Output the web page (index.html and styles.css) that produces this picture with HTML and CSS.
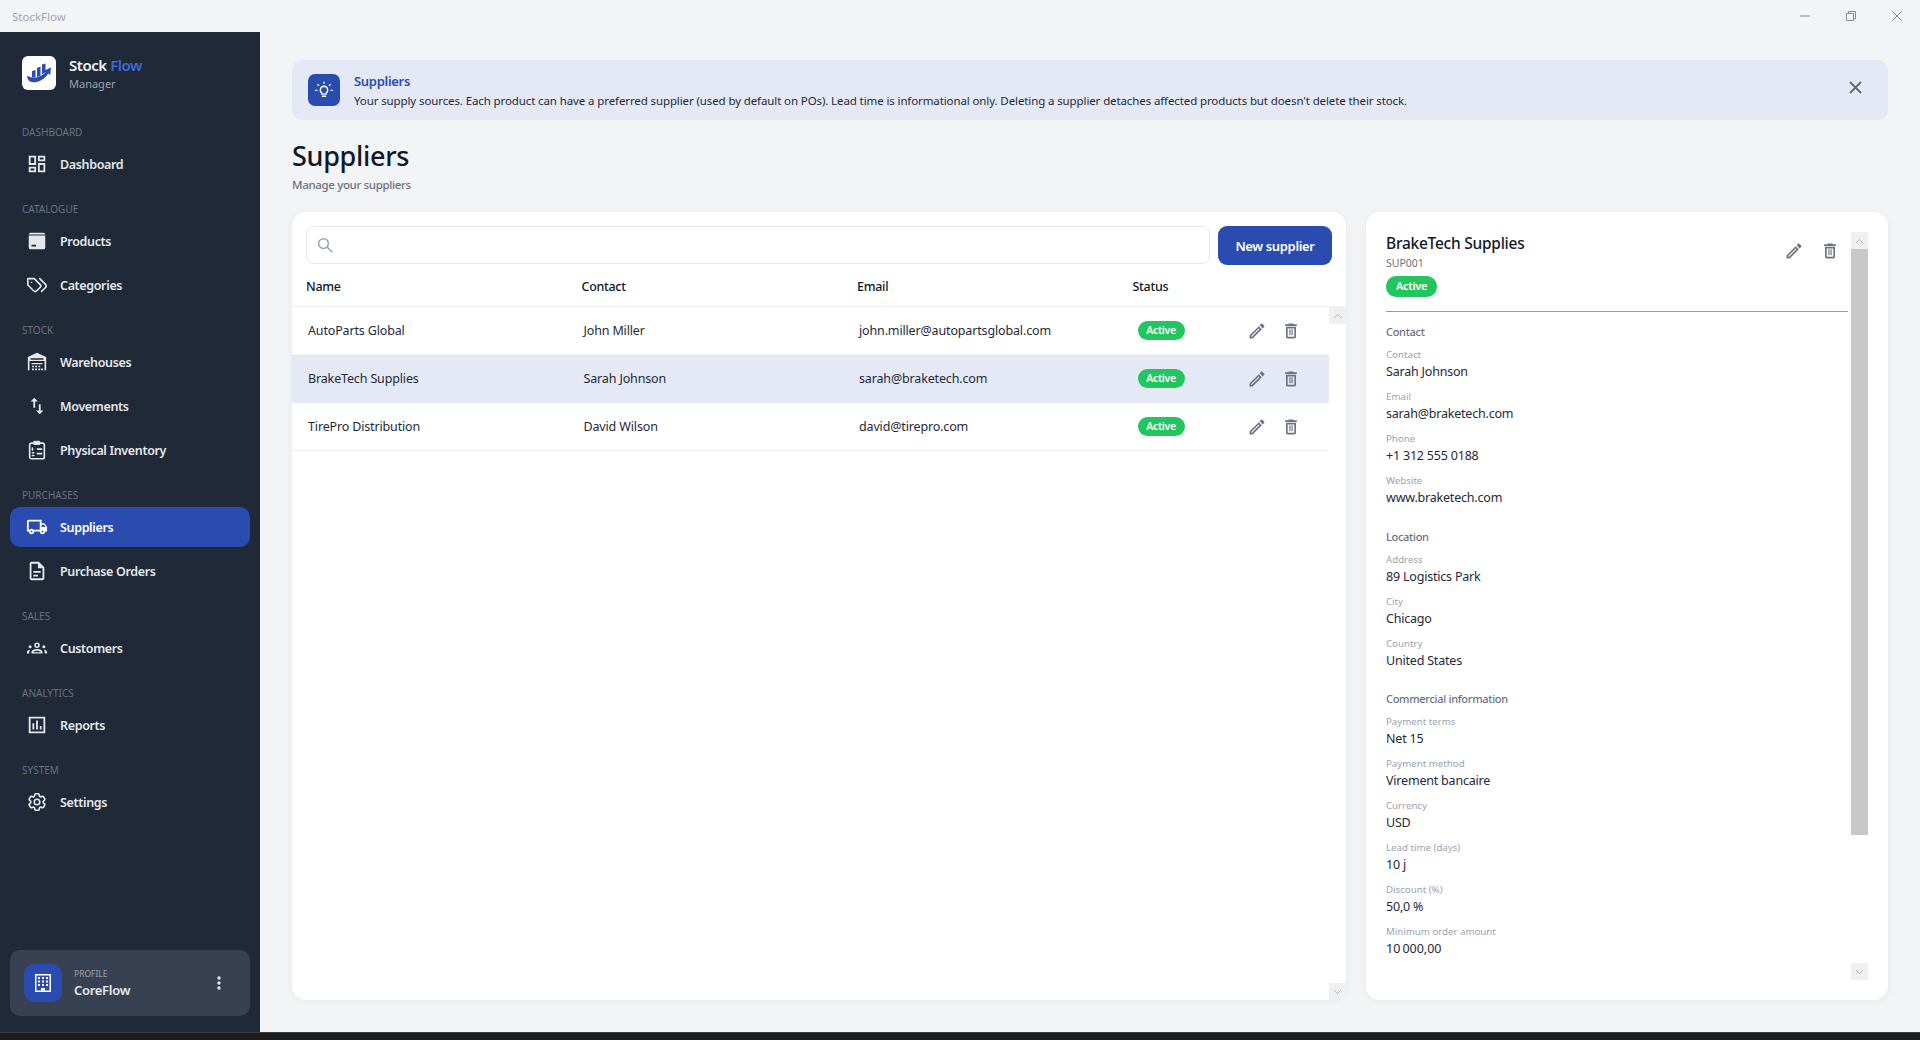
FILE: index.html
```html
<!DOCTYPE html>
<html>
<head>
    <title>StockFlow</title>
    <link rel="stylesheet" href="styles.css">
</head>
<body>
    <svg class="defs" width="0" height="0">
        <symbol id="i-edit" viewBox="0 0 24 24"><path d="M3 17.25V21h3.75L17.81 9.94l-3.75-3.75L3 17.25zM5.92 19H5v-.92l9.06-9.06.92.92L5.92 19zM20.71 5.63l-2.34-2.34c-.2-.2-.45-.29-.71-.29s-.51.1-.7.29l-1.83 1.83 3.75 3.75 1.83-1.83c.39-.39.39-1.02 0-1.41z"/></symbol>
        <symbol id="i-trash" viewBox="0 0 24 24"><path d="M16 9v10H8V9h8m-1.5-6h-5l-1 1H5v2h14V4h-3.5l-1-1zM18 7H6v12c0 1.1.9 2 2 2h8c1.1 0 2-.9 2-2V7z"/><path d="M10 10h1.4v7H10zM12.6 10H14v7h-1.4z"/></symbol>
    </svg>

    <!-- title bar -->
    <header class="titlebar">
        <span class="app-name">StockFlow</span>
        <div class="win-controls">
            <svg width="12" height="12" viewBox="0 0 12 12"><path d="M1 6h10" /></svg>
            <svg width="12" height="12" viewBox="0 0 12 12"><path d="M1.5 3.5h7v7h-7zM3.5 3.5v-2h7v7h-2" /></svg>
            <svg width="12" height="12" viewBox="0 0 12 12"><path d="M1 1l10 10M11 1L1 11" /></svg>
        </div>
    </header>

    <div class="app">
        <!-- sidebar -->
        <aside class="sidebar">
            <div class="brand">
                <div class="brand-logo">
                    <svg width="26" height="26" viewBox="0 0 26 26">
                        <path d="M6 11l3.500-1v7l-3.500.5zM11 8l3.500-1.500V16l-3.500.8zM16 4.500l3.500-1v8.500L16 14.500z" fill="#2a4bb3"/>
                        <path d="M1 15.500c5 3.500 13 2.500 18.500-3L17.500 11 25 7.500l-.8 7.500-2-1.500C18 20.500 9 24 4 21.500c-2-1-2.700-3.500-3-6z" fill="#2a4bb3"/>
                    </svg>
                </div>
                <div>
                    <div class="brand-name">Stock <span class="flow">Flow</span></div>
                    <div class="brand-sub">Manager</div>
                </div>
            </div>

            <nav class="nav">
                <div class="nav-label">DASHBOARD</div>
                <a class="nav-item"><svg class="nav-icon" viewBox="0 0 24 24"><path d="M19 5v2h-4V5h4M9 5v6H5V5h4m10 8v6h-4v-6h4M9 17v2H5v-2h4M21 3h-8v6h8V3zM11 3H3v10h8V3zm10 8h-8v10h8V11zm-10 4H3v6h8v-6z"/></svg>Dashboard</a>

                <div class="nav-label">CATALOGUE</div>
                <a class="nav-item"><svg class="nav-icon" viewBox="0 0 24 24"><path d="M5 3h14a2 2 0 0 1 2 2H3a2 2 0 0 1 2-2zM3 6h18v13a2 2 0 0 1-2 2H5a2 2 0 0 1-2-2zm3 10v2h5v-2z"/></svg>Products</a>
                <a class="nav-item"><svg class="nav-icon line" viewBox="0 0 24 24"><path d="M9 5H2v7l6.3 6.3c.9.9 2.5.9 3.4 0l3.6-3.6c.9-.9.9-2.5 0-3.4L9 5Z"/><path d="M6 9.01V9"/><path d="m15 5 6.3 6.3a2.4 2.4 0 0 1 0 3.4L17 19"/></svg>Categories</a>

                <div class="nav-label">STOCK</div>
                <a class="nav-item"><svg class="nav-icon" viewBox="0 0 24 24"><path d="M12 2 22 6.500V21h-1.800V11H3.800v10H2V6.500zM5 9.500h14V8H5z"/><path d="M6 13h12v1.500H6zM6.500 16h2v1.800h-2zm3.500 0h2v1.800h-2zm3.500 0h2v1.800h-2zM6.500 19.200h2V21h-2zm3.500 0h2V21h-2zm3.500 0h2V21h-2zm3 0h2V21h-2z"/></svg>Warehouses</a>
                <a class="nav-item"><svg class="nav-icon" viewBox="0 0 24 24"><path d="M16 17.01V10h-2v7.01h-3L15 21l4-3.990h-3zM9 3 5 6.990h3V14h2V6.990h3L9 3z"/></svg>Movements</a>
                <a class="nav-item"><svg class="nav-icon line" viewBox="0 0 24 24"><rect x="4" y="4.500" width="16" height="17" rx="2"/><rect x="9" y="2.500" width="6" height="3.500" fill="#e5e7eb" stroke-width="1"/><path d="M12.500 11H17M12.500 16H17M7 10v2M7 15h1.500M7 18h1.500"/></svg>Physical Inventory</a>

                <div class="nav-label">PURCHASES</div>
                <a class="nav-item active"><svg class="nav-icon" viewBox="0 0 24 24"><path d="M20 8h-3V4H3c-1.100 0-2 .9-2 2v11h2c0 1.660 1.340 3 3 3s3-1.340 3-3h6c0 1.660 1.340 3 3 3s3-1.340 3-3h2v-5l-3-4zm-.5 1.500 1.960 2.500H17V9.500h2.500zM6 18c-.55 0-1-.45-1-1s.45-1 1-1 1 .45 1 1-.45 1-1 1zm2.220-3c-.55-.61-1.330-1-2.220-1s-1.670.39-2.220 1H3V6h12v9H8.220zM18 18c-.55 0-1-.45-1-1s.45-1 1-1 1 .45 1 1-.45 1-1 1z"/></svg>Suppliers</a>
                <a class="nav-item"><svg class="nav-icon" viewBox="0 0 24 24"><path d="M8 16h5v2H8zm0-4h8v2H8zm6-10H6c-1.100 0-2 .9-2 2v16c0 1.100.89 2 1.990 2H18c1.100 0 2-.9 2-2V8l-6-6zm4 18H6V4h7v5h5v11z"/></svg>Purchase Orders</a>

                <div class="nav-label">SALES</div>
                <a class="nav-item"><svg class="nav-icon" viewBox="0 0 24 24"><path d="M12 6a3 3 0 1 1 0 6 3 3 0 0 1 0-6zm0 1.700a1.300 1.300 0 1 0 0 2.600 1.300 1.300 0 0 0 0-2.600zM6 16.500c0-2 3-3.300 6-3.300s6 1.300 6 3.300V18H6zm2 0h8c-.5-1-2.300-1.600-4-1.600S8.500 15.500 8 16.500zM4.500 9a1.700 1.700 0 1 1 0 3.400 1.700 1.700 0 0 1 0-3.400zM19.500 9a1.700 1.700 0 1 1 0 3.400 1.700 1.700 0 0 1 0-3.400zM1 16.500c0-1.500 1.500-2.500 3.500-2.700-.6.7-.9 1.600-.9 2.700V18H1zM23 16.500c0-1.500-1.500-2.500-3.500-2.700.6.7.9 1.600.9 2.700V18H23z"/></svg>Customers</a>

                <div class="nav-label">ANALYTICS</div>
                <a class="nav-item"><svg class="nav-icon" viewBox="0 0 24 24"><path d="M3 3h18v18H3zm2 2v14h14V5zM7 10h2v7H7zm4-3h2v10h-2zm4 6h2v4h-2z"/></svg>Reports</a>

                <div class="nav-label">SYSTEM</div>
                <a class="nav-item"><svg class="nav-icon line" viewBox="0 0 24 24"><path d="M9.594 3.940c.09-.542.56-.94 1.110-.94h2.593c.55 0 1.020.398 1.110.94l.213 1.281c.063.374.313.686.645.870.074.04.147.083.22.127.325.196.72.257 1.075.124l1.217-.456a1.125 1.125 0 0 1 1.370.49l1.296 2.247a1.125 1.125 0 0 1-.26 1.431l-1.003.827c-.293.241-.438.613-.43.992a7.723 7.723 0 0 1 0 .255c-.008.378.137.75.43.991l1.004.827c.424.35.534.955.26 1.430l-1.298 2.247a1.125 1.125 0 0 1-1.369.491l-1.217-.456c-.355-.133-.75-.072-1.076.124a6.470 6.470 0 0 1-.22.128c-.331.183-.581.495-.644.869l-.213 1.281c-.09.543-.56.94-1.110.94h-2.594c-.55 0-1.019-.398-1.110-.94l-.213-1.281c-.062-.374-.312-.686-.644-.870a6.520 6.520 0 0 1-.22-.127c-.325-.196-.72-.257-1.076-.124l-1.217.456a1.125 1.125 0 0 1-1.369-.49l-1.297-2.247a1.125 1.125 0 0 1 .26-1.431l1.004-.827c.292-.24.437-.613.43-.991a6.932 6.932 0 0 1 0-.255c.007-.38-.138-.751-.43-.992l-1.004-.827a1.125 1.125 0 0 1-.26-1.430l1.297-2.247a1.125 1.125 0 0 1 1.370-.491l1.216.456c.356.133.751.072 1.076-.124.072-.044.146-.086.22-.128.332-.183.582-.495.644-.869l.214-1.280Z"/><circle cx="12" cy="12" r="3"/></svg>Settings</a>
            </nav>

            <div class="profile">
                <div class="profile-icon">
                    <svg width="16" height="20" viewBox="0 0 16 20">
                        <path fill="#fff" d="M0 1h16v18H0zm1.500 1.500v15H6V15h4v2.500h4.500v-15z"/>
                        <path fill="#fff" d="M3 4h2v2H3zm4 0h2v2H7zm4 0h2v2h-2zM3 7.500h2v2H3zm4 0h2v2H7zm4 0h2v2h-2zM3 11h2v2H3zm4 0h2v2H7zm4 0h2v2h-2z"/>
                    </svg>
                </div>
                <div class="profile-text">
                    <div class="profile-label">PROFILE</div>
                    <div class="profile-name">CoreFlow</div>
                </div>
                <svg class="profile-more" width="4" height="14" viewBox="0 0 4 14"><circle cx="2" cy="2" r="1.700"/><circle cx="2" cy="7" r="1.700"/><circle cx="2" cy="12" r="1.700"/></svg>
            </div>
        </aside>

        <!-- main -->
        <main class="main">
            <div class="banner">
                <div class="banner-icon">
                    <svg class="bulb" width="20" height="20" viewBox="0 0 24 24">
                        <path d="M12 7.500a4.500 4.500 0 0 0-2.500 8.200V17h5v-1.300A4.500 4.500 0 0 0 12 7.500zM10 19.500h4"/>
                        <path d="M12 2.500v1.500M4.500 5.500l1 1M19.500 5.500l-1 1M2 12.500h1.500M20.500 12.500H22"/>
                    </svg>
                </div>
                <div class="banner-text">
                    <div class="banner-title">Suppliers</div>
                    <div class="banner-desc">Your supply sources. Each product can have a preferred supplier (used by default on POs). Lead time is informational only. Deleting a supplier detaches affected products but doesn't delete their stock.</div>
                </div>
                <svg class="banner-close" width="13" height="13" viewBox="0 0 13 13"><path d="M1 1l11 11M12 1L1 12"/></svg>
            </div>

            <h1 class="page-title">Suppliers</h1>
            <div class="page-sub">Manage your suppliers</div>

            <div class="panels">
                <section class="list-card">
                    <div class="toolbar">
                        <div class="search">
                            <svg width="18" height="18" viewBox="0 0 24 24"><circle cx="10" cy="10" r="6.500"/><path d="M15 15l6.500 6.500"/></svg>
                        </div>
                        <button class="btn-primary">New supplier</button>
                    </div>
                    <div class="table-head">
                        <div>Name</div>
                        <div>Contact</div>
                        <div>Email</div>
                        <div>Status</div>
                    </div>
                    <div class="table-wrap">
                        <div class="table-body">
                            <div class="row">
                                <div>AutoParts Global</div>
                                <div>John Miller</div>
                                <div>john.miller@autopartsglobal.com</div>
                                <div class="status-cell"><span class="badge">Active</span></div>
                                <div class="row-actions"><svg class="act"><use href="#i-edit"/></svg><svg class="act"><use href="#i-trash"/></svg></div>
                            </div>
                            <div class="row selected">
                                <div>BrakeTech Supplies</div>
                                <div>Sarah Johnson</div>
                                <div>sarah@braketech.com</div>
                                <div class="status-cell"><span class="badge">Active</span></div>
                                <div class="row-actions"><svg class="act"><use href="#i-edit"/></svg><svg class="act"><use href="#i-trash"/></svg></div>
                            </div>
                            <div class="row">
                                <div>TirePro Distribution</div>
                                <div>David Wilson</div>
                                <div>david@tirepro.com</div>
                                <div class="status-cell"><span class="badge">Active</span></div>
                                <div class="row-actions"><svg class="act"><use href="#i-edit"/></svg><svg class="act"><use href="#i-trash"/></svg></div>
                            </div>
                        </div>
                        <div class="scrollbar">
                            <div class="sb-btn"><svg width="9" height="6" viewBox="0 0 9 6"><path d="M1 5l3.500-3.500L8 5"/></svg></div>
                            <div class="sb-track"></div>
                            <div class="sb-btn"><svg width="9" height="6" viewBox="0 0 9 6"><path d="M1 1l3.500 3.500L8 1"/></svg></div>
                        </div>
                    </div>
                </section>

                <section class="detail-card">
                    <div class="detail-scroll">
                        <div class="detail-head">
                            <div>
                                <div class="detail-name">BrakeTech Supplies</div>
                                <div class="detail-code">SUP001</div>
                                <span class="badge badge-lg">Active</span>
                            </div>
                            <div class="detail-actions"><svg class="act"><use href="#i-edit"/></svg><svg class="act"><use href="#i-trash"/></svg></div>
                        </div>

                        <div class="section-title">Contact</div>
                        <div class="field"><div class="field-label">Contact</div><div class="field-value">Sarah Johnson</div></div>
                        <div class="field"><div class="field-label">Email</div><div class="field-value">sarah@braketech.com</div></div>
                        <div class="field"><div class="field-label">Phone</div><div class="field-value">+1 312 555 0188</div></div>
                        <div class="field"><div class="field-label">Website</div><div class="field-value">www.braketech.com</div></div>

                        <div class="section-title">Location</div>
                        <div class="field"><div class="field-label">Address</div><div class="field-value">89 Logistics Park</div></div>
                        <div class="field"><div class="field-label">City</div><div class="field-value">Chicago</div></div>
                        <div class="field"><div class="field-label">Country</div><div class="field-value">United States</div></div>

                        <div class="section-title">Commercial information</div>
                        <div class="field"><div class="field-label">Payment terms</div><div class="field-value">Net 15</div></div>
                        <div class="field"><div class="field-label">Payment method</div><div class="field-value">Virement bancaire</div></div>
                        <div class="field"><div class="field-label">Currency</div><div class="field-value">USD</div></div>
                        <div class="field"><div class="field-label">Lead time (days)</div><div class="field-value">10 j</div></div>
                        <div class="field"><div class="field-label">Discount (%)</div><div class="field-value">50,0 %</div></div>
                        <div class="field"><div class="field-label">Minimum order amount</div><div class="field-value">10&#8239;000,00</div></div>
                    </div>
                    <div class="scrollbar scrollbar-detail">
                        <div class="sb-btn"><svg width="9" height="6" viewBox="0 0 9 6"><path d="M1 5l3.500-3.500L8 5"/></svg></div>
                        <div class="sb-thumb"></div>
                        <div class="sb-track"></div>
                        <div class="sb-btn"><svg width="9" height="6" viewBox="0 0 9 6"><path d="M1 1l3.500 3.500L8 1"/></svg></div>
                    </div>
                </section>
            </div>
        </main>
    </div>

    <div class="bottom-strip"></div>
</body>
</html>
```

FILE: styles.css
```css
* {
    box-sizing: border-box;
}

body {
    margin: 0;
    height: 1040px;
    overflow: hidden;
    display: flex;
    flex-direction: column;
    background: #f3f4f6;
    font-family: "Noto Sans", "Open Sans", sans-serif;
    color: #111827;
}

.defs {
    position: absolute;
}

/* title bar */
.titlebar {
    height: 32px;
    flex: none;
    display: flex;
    align-items: center;
    justify-content: space-between;
    padding-left: 12px;
}

.app-name {
    font-size: 11.5px;
    color: #a3a6ab;
}

.win-controls {
    display: flex;
    gap: 34px;
    padding-right: 17px;
}

.win-controls svg {
    fill: none;
    stroke: #8a8a8a;
    stroke-width: 1;
}

.app {
    flex: 1;
    display: flex;
    min-height: 0;
}

/* sidebar */
.sidebar {
    width: 260px;
    flex: none;
    background: #1f2937;
    display: flex;
    flex-direction: column;
    padding: 24px 10px 16px;
}

.brand {
    display: flex;
    align-items: center;
    gap: 13px;
    padding-left: 12px;
    height: 34px;
    margin-bottom: 17px;
}

.brand-logo {
    width: 34px;
    height: 34px;
    background: #fff;
    border-radius: 6px;
    display: flex;
    align-items: center;
    justify-content: center;
}

.brand-name {
    font-size: 15px;
    font-weight: 600;
    line-height: 20px;
    color: #f3f4f6;
    letter-spacing: -0.45px;
}

.flow {
    color: #4169d8;
}

.brand-sub {
    font-size: 11px;
    line-height: 15px;
    padding-top: 1px;
    color: #9ca3af;
}

.nav {
    flex: 1;
}

.nav-label {
    font-size: 10px;
    line-height: 14px;
    height: 14px;
    margin: 18px 0 5px 12px;
    color: #6b7280;
}

.nav-item {
    display: flex;
    align-items: center;
    height: 40px;
    margin-bottom: 4px;
    padding-left: 16px;
    gap: 12px;
    border-radius: 10px;
    font-size: 12.5px;
    font-weight: 600;
    letter-spacing: -0.35px;
    color: #e5e7eb;
}

.nav-item:last-child {
    margin-bottom: 0;
}

.nav-item.active {
    background: #2a4bb0;
    color: #fff;
}

.nav-icon {
    width: 22px;
    height: 22px;
    flex: none;
    fill: #e5e7eb;
}

.nav-icon.line {
    fill: none;
    stroke: #e5e7eb;
    stroke-width: 1.8;
    stroke-linecap: round;
    stroke-linejoin: round;
}

.active .nav-icon {
    fill: #fff;
}

.profile {
    height: 66px;
    background: #374151;
    border-radius: 10px;
    display: flex;
    align-items: center;
    padding: 0 29px 0 14px;
    gap: 12px;
}

.profile-icon {
    width: 38px;
    height: 38px;
    background: #2a4bb0;
    border-radius: 10px;
    display: flex;
    align-items: center;
    justify-content: center;
}

.profile-text {
    flex: 1;
}

.profile-label {
    font-size: 8.5px;
    line-height: 12px;
    color: #9ca3af;
}

.profile-name {
    font-size: 13px;
    font-weight: 600;
    line-height: 18px;
    padding-top: 1px;
    color: #e5e7eb;
    letter-spacing: -0.3px;
}

.profile-more {
    fill: #e5e7eb;
}

/* main */
.main {
    flex: 1;
    min-width: 0;
    display: flex;
    flex-direction: column;
    padding: 28px 32px 32px;
}

.banner {
    height: 60px;
    flex: none;
    background: #e5e9f6;
    border-radius: 10px;
    display: flex;
    align-items: center;
    padding: 0 26px 0 16px;
    gap: 14px;
}

.banner-icon {
    width: 32px;
    height: 32px;
    background: #2a4bb0;
    border-radius: 7px;
    display: flex;
    align-items: center;
    justify-content: center;
}

.bulb {
    fill: none;
    stroke: #fff;
    stroke-width: 1.6;
    stroke-linecap: round;
}

.banner-text {
    flex: 1;
}

.banner-title {
    font-size: 13px;
    font-weight: 600;
    line-height: 20px;
    letter-spacing: -0.3px;
    color: #2a4bb0;
}

.banner-desc {
    font-size: 11.5px;
    line-height: 18px;
    margin-top: 1px;
    letter-spacing: -0.11px;
    color: #1f2937;
}

.banner-close {
    margin-bottom: 6px;
    fill: none;
    stroke: #5f6673;
    stroke-width: 1.8;
}

.page-title {
    margin: 17px 0 0;
    font-size: 27px;
    font-weight: 500;
    line-height: 38px;
    letter-spacing: -0.3px;
    color: #111827;
}

.page-sub {
    font-size: 11.5px;
    line-height: 16px;
    margin-top: 2px;
    letter-spacing: -0.35px;
    font-weight: 500;
    color: #6b7280;
    margin-bottom: 19px;
}

.panels {
    flex: 1;
    min-height: 0;
    display: flex;
    gap: 20px;
}

.list-card,
.detail-card {
    background: #fff;
    border-radius: 14px;
    box-shadow: 0 1px 8px rgba(0, 0, 0, 0.05);
    overflow: hidden;
}

.list-card {
    width: 1054px;
    flex: none;
    display: flex;
    flex-direction: column;
}

.toolbar {
    display: flex;
    gap: 8px;
    padding: 14px 14px 0;
}

.search {
    flex: 1;
    height: 38px;
    border: 1px solid #e5e7eb;
    border-radius: 8px;
    display: flex;
    align-items: center;
    padding-left: 9px;
}

.search svg {
    fill: none;
    stroke: #9ca3af;
    stroke-width: 2;
}

.btn-primary {
    width: 114px;
    height: 39px;
    border: none;
    border-radius: 9px;
    background: #2a4bb0;
    color: #fff;
    font-family: inherit;
    font-size: 13px;
    font-weight: 600;
    letter-spacing: -0.35px;
}

.table-head {
    display: grid;
    grid-template-columns: 275.5px 275.5px 275.5px 100px;
    padding: 2px 0 0 14px;
    height: 41px;
    align-items: center;
    font-size: 12.5px;
    font-weight: 500;
    letter-spacing: -0.3px;
    color: #111827;
}

.table-wrap {
    flex: 1;
    min-height: 0;
    display: flex;
    border-top: 1px solid #f0f1f3;
}

.table-body {
    flex: 1;
}

.row {
    display: grid;
    grid-template-columns: 275.5px 275.5px 275.5px 100px 1fr;
    height: 48px;
    padding-left: 16px;
    align-items: center;
    font-size: 12.5px;
    letter-spacing: -0.15px;
    color: #1f2937;
    border-bottom: 1px solid #f0f1f3;
}

.row.selected {
    background: #e5e9f6;
    border-bottom-color: #e5e9f6;
}

.status-cell {
    padding-left: 3px;
}

.badge {
    display: inline-block;
    width: 47px;
    height: 19px;
    line-height: 18px;
    border-radius: 10px;
    background: #22c55e;
    color: #fff;
    font-size: 10.5px;
    font-weight: 600;
    letter-spacing: -0.3px;
    text-align: center;
}

.badge-lg {
    display: block;
    width: 51px;
    height: 21px;
    line-height: 20px;
    font-size: 11px;
}

.row-actions {
    display: flex;
    gap: 14px;
    padding-left: 12px;
}

.act {
    width: 20px;
    height: 20px;
    fill: #6b7280;
}

.scrollbar {
    width: 17px;
    flex: none;
    display: flex;
    flex-direction: column;
}

.sb-btn {
    height: 17px;
    background: #f0f0f0;
    display: flex;
    align-items: center;
    justify-content: center;
}

.sb-btn svg {
    fill: none;
    stroke: #b4b4b4;
    stroke-width: 1;
}

.sb-track {
    flex: 1;
}

.sb-thumb {
    height: 586px;
    background: #c8c8c8;
}

/* detail */
.detail-card {
    flex: 1;
    display: flex;
    padding: 20px;
}

.detail-scroll {
    flex: 1;
    padding-right: 3px;
    min-width: 0;
}

.detail-head {
    display: flex;
    justify-content: space-between;
    border-bottom: 1px solid #9a9a9a;
    height: 80px;
}

.detail-name {
    font-size: 15.5px;
    font-weight: 500;
    line-height: 22px;
    letter-spacing: -0.25px;
    color: #111827;
}

.detail-code {
    font-size: 10.5px;
    line-height: 15px;
    margin: 2px 0 5px;
    color: #6b7280;
}

.detail-actions {
    display: flex;
    gap: 16px;
    padding: 9px 8px 0 0;
}

.section-title {
    margin-top: 12px;
    margin-bottom: 8px;
    font-size: 11px;
    font-weight: 500;
    line-height: 16px;
    letter-spacing: -0.3px;
    color: #6b7280;
}

.field + .section-title {
    margin-top: 12.5px;
}

.field {
    height: 42px;
}

.field-label {
    font-size: 9.7px;
    line-height: 14px;
    color: #9ca3af;
}

.field-value {
    font-size: 12.5px;
    line-height: 20px;
    letter-spacing: -0.2px;
    color: #1f2937;
}

.bottom-strip {
    height: 8px;
    flex: none;
    background: #1c1c1c;
    border-top: 1px solid #3a3a3a;
}
```
